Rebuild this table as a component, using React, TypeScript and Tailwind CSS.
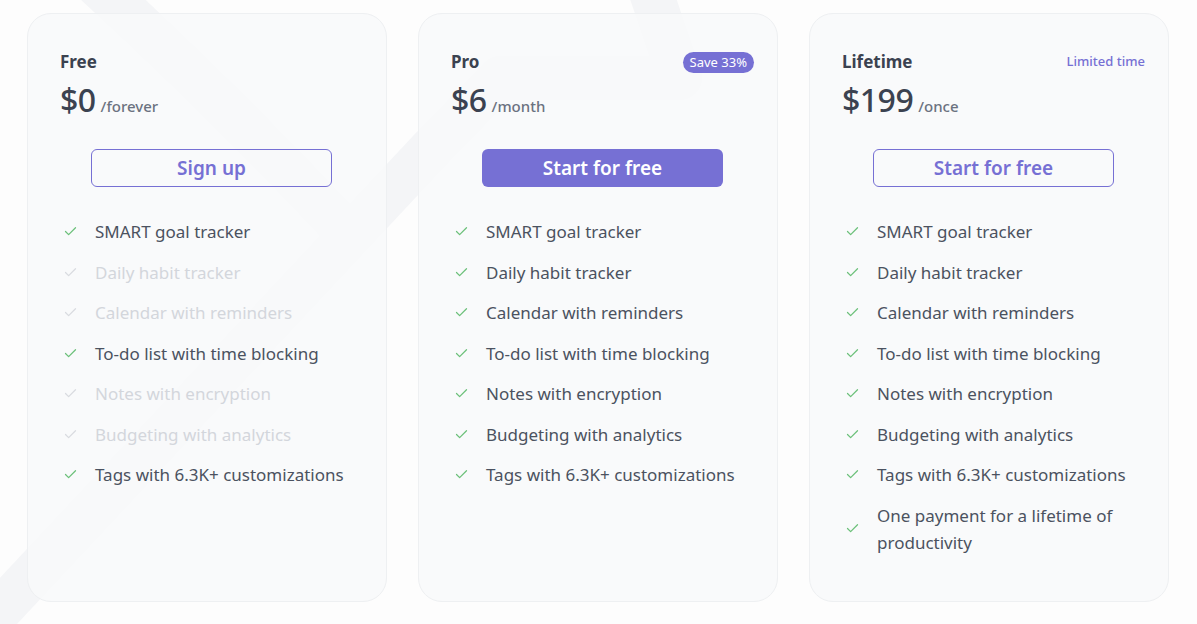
import { Check } from 'lucide-react';

type Feature = { label: string; enabled: boolean };

interface Plan {
  name: string;
  price: string;
  period: string;
  cta: string;
  primary: boolean;
  tag?: 'badge' | 'text';
  tagLabel?: string;
  features: Feature[];
}

const ALL = [
  'SMART goal tracker',
  'Daily habit tracker',
  'Calendar with reminders',
  'To-do list with time blocking',
  'Notes with encryption',
  'Budgeting with analytics',
  'Tags with 6.3K+ customizations',
];

const FREE_ENABLED = [true, false, false, true, false, false, true];

const PLANS: Plan[] = [
  {
    name: 'Free',
    price: '$0',
    period: '/forever',
    cta: 'Sign up',
    primary: false,
    features: ALL.map((label, i) => ({ label, enabled: FREE_ENABLED[i] })),
  },
  {
    name: 'Pro',
    price: '$6',
    period: '/month',
    cta: 'Start for free',
    primary: true,
    tag: 'badge',
    tagLabel: 'Save 33%',
    features: ALL.map((label) => ({ label, enabled: true })),
  },
  {
    name: 'Lifetime',
    price: '$199',
    period: '/once',
    cta: 'Start for free',
    primary: false,
    tag: 'text',
    tagLabel: 'Limited time',
    features: [
      ...ALL.map((label) => ({ label, enabled: true })),
      { label: 'One payment for a lifetime of productivity', enabled: true },
    ],
  },
];

function PlanCard({ plan }: { plan: Plan }) {
  return (
    <div className="rounded-[24px] border border-[#eef0f2] bg-[#f8f9fa]/85 pl-[32px] pr-[23px] pt-[36px] pb-[45px]">
      {/* Header */}
      <div className="flex items-center justify-between h-6">
        <h3 className="text-[17px] font-bold text-[#3b4250]">{plan.name}</h3>
        {plan.tag === 'badge' && (
          <span className="rounded-full bg-[#7670d4] px-[7px] h-[21px] leading-[21px] text-[13px] text-white">
            {plan.tagLabel}
          </span>
        )}
        {plan.tag === 'text' && (
          <span className="text-[13px] font-medium text-[#7670d4]">{plan.tagLabel}</span>
        )}
      </div>
      <div className="mt-[6px] flex items-baseline gap-[5px] h-[40px]">
        <span className="text-[32px] font-medium leading-[40px] text-[#3b4250] tracking-[-0.5px]">{plan.price}</span>
        <span className="text-[15px] font-medium text-[#6b7280]">{plan.period}</span>
      </div>

      <button
        className={`mx-auto mt-[29px] flex h-[38px] w-[241px] items-center justify-center rounded-[6px] text-[19px] font-semibold ${
          plan.primary
            ? 'bg-[#7670d4] text-white'
            : 'border border-[#7670d4] text-[#7670d4] bg-transparent'
        }`}
      >
        {plan.cta}
      </button>

      {/* Features */}
      <ul className="mt-[31px] flex flex-col gap-[13.5px]">
        {plan.features.map((f) => (
          <li key={f.label} className="flex items-center gap-[15px]">
            <span className="flex w-5 shrink-0 justify-center">
              <Check
                size={15}
                strokeWidth={2}
                className={f.enabled ? 'text-[#6cc07a]' : 'text-[#d9dbe0]'}
              />
            </span>
            <span
              className={`text-[17px] leading-[27px] ${
                f.enabled ? 'text-[#4b5260]' : 'text-[#d3d6dc]'
              } ${f.label.startsWith('One payment') ? 'max-w-[240px]' : ''}`}
            >
              {f.label}
            </span>
          </li>
        ))}
      </ul>
    </div>
  );
}

export default function App() {
  return (
    <div
      className="relative h-[624px] w-[1197px] overflow-hidden bg-[#fdfdfd]"
      style={{ fontFamily: '"Noto Sans", "Open Sans", sans-serif' }}
    >
      {/* faint decorative band */}
      <svg className="absolute inset-0" width="1197" height="624" viewBox="0 0 1197 624" fill="none">
        <path
          d="M70 -40 C 180 60, 260 140, 335 220 M 0 610 L 430 150 L 500 78 L 680 78 L 640 -40"
          stroke="#f4f5f7"
          strokeWidth="44"
          strokeLinecap="round"
          strokeLinejoin="round"
        />
      </svg>
      <div className="relative grid grid-cols-[360px_360px_360px] gap-x-[31px] pl-[27px] pt-[13px]">
        {PLANS.map((p) => (
          <PlanCard key={p.name} plan={p} />
        ))}
      </div>
    </div>
  );
}
